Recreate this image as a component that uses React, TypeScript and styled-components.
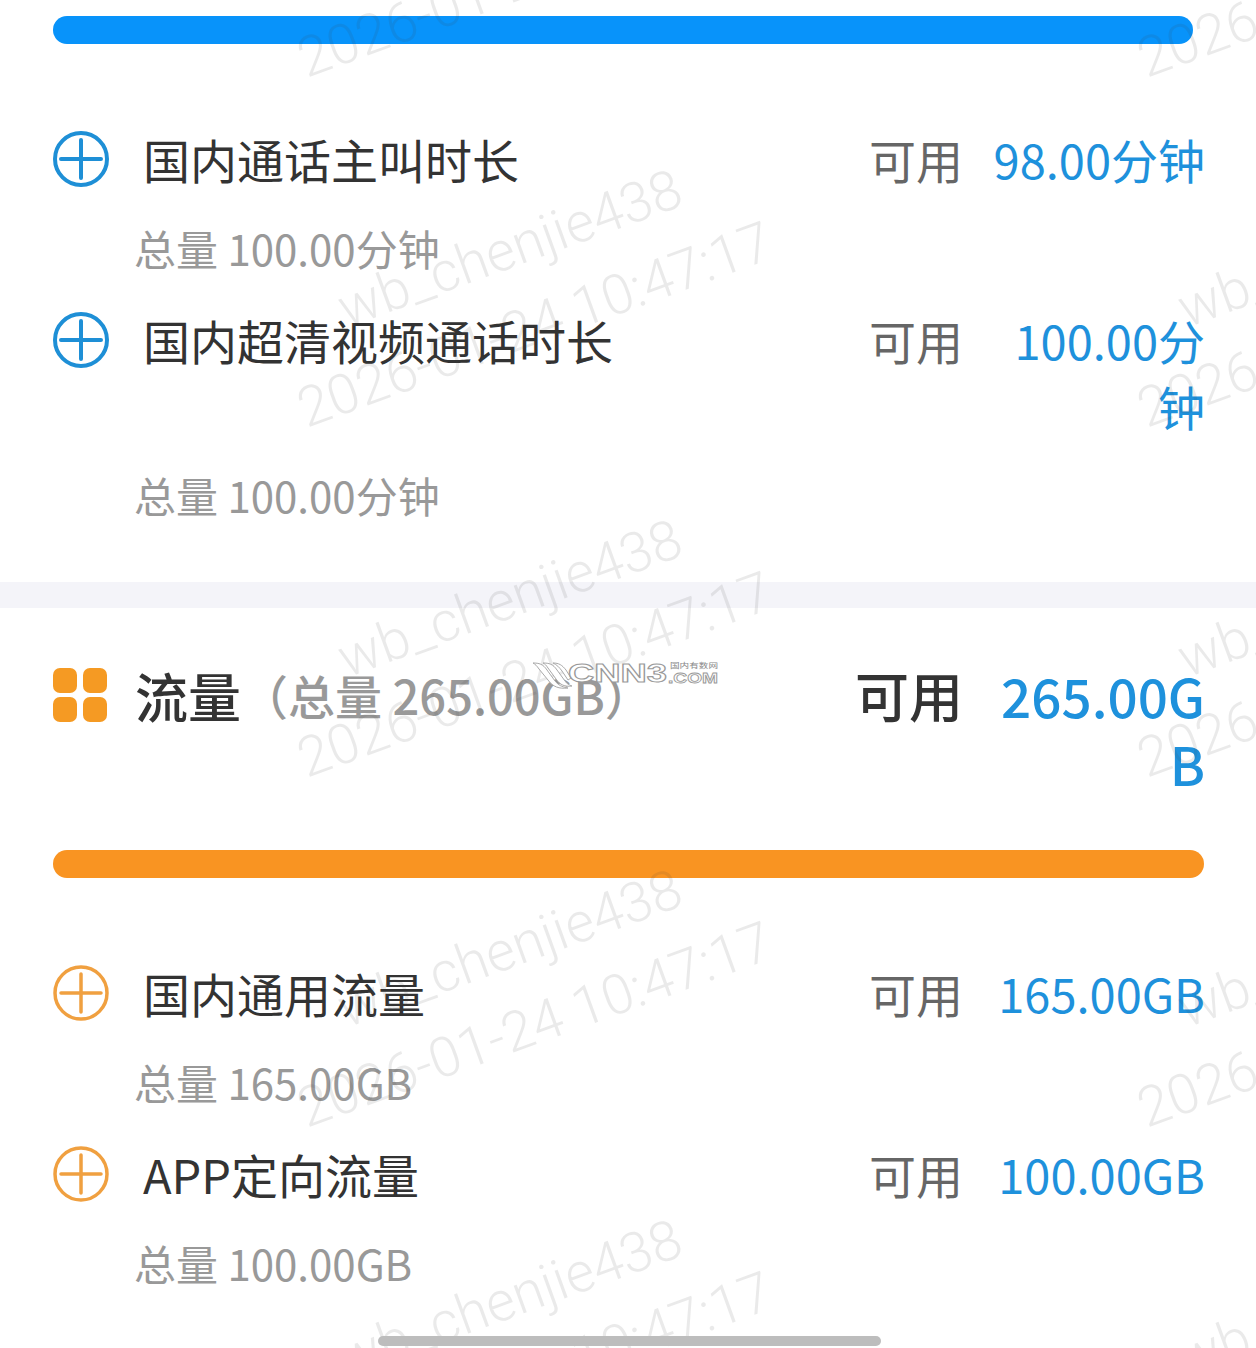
import React from "react";
import styled, { createGlobalStyle } from "styled-components";

const Global = createGlobalStyle`
  html, body { margin: 0; padding: 0; background: #fff; }
  body { font-family: "Noto Sans CJK SC", "Noto Sans", sans-serif; }
`;

const Page = styled.div`
  position: relative;
  width: 1256px;
  height: 1348px;
  overflow: hidden;
  background: #fff;
`;

const Section = styled.section<{ $pb: number }>`
  padding: 0 51px ${(p) => p.$pb}px 53px;
`;

const FirstSection = styled(Section)`
  padding-top: 16px;
`;

const Band = styled.div`
  height: 26px;
  background: #f4f4f9;
`;

const Header = styled.header`
  display: flex;
  align-items: flex-start;
  justify-content: space-between;
  padding-top: 53px;
`;

const HeaderLeft = styled.div`
  display: flex;
  align-items: center;
  height: 68px;
`;

const HeaderTitle = styled.span`
  margin-left: 28px;
  font-size: 53px;
  line-height: 68px;
  font-weight: 500;
  color: #333;
`;

const HeaderTotal = styled.span`
  font-size: 47px;
  line-height: 68px;
  font-weight: 500;
  color: #999;
`;

const Bar = styled.div<{ $color: string; $w: number }>`
  width: ${(p) => p.$w}px;
  height: 28px;
  border-radius: 14px;
  background: ${(p) => p.$color};
`;

const HeaderBar = styled(Bar)`
  margin-top: 53px;
`;

const List = styled.div`
  margin-top: 82px;
  display: flex;
  flex-direction: column;
`;

const Row = styled.div`
  display: flex;
  align-items: flex-start;
  justify-content: space-between;
`;

const NameWrap = styled.div`
  display: flex;
  align-items: center;
  height: 66px;
`;

const Name = styled.span`
  margin-left: 34px;
  font-size: 47px;
  line-height: 66px;
  color: #333;
`;

const Avail = styled.div<{ $big?: boolean }>`
  display: flex;
  align-items: flex-start;
  line-height: ${(p) => (p.$big ? 68 : 66)}px;
`;

const AvailLabel = styled.span<{ $big?: boolean }>`
  white-space: nowrap;
  font-weight: ${(p) => (p.$big ? 500 : 400)};
  color: ${(p) => (p.$big ? "#333" : "#666")};
  font-size: ${(p) => (p.$big ? 54 : 47)}px;
`;

const AvailValue = styled.span<{ $big?: boolean }>`
  width: 212px;
  margin-left: ${(p) => (p.$big ? 30 : 30)}px;
  text-align: right;
  word-break: break-all;
  color: #1e91dc;
  font-size: ${(p) => (p.$big ? 53 : 47)}px;
  font-weight: ${(p) => (p.$big ? 500 : 400)};
`;

const Total = styled.div`
  padding: 28px 0 31px 81px;
  font-size: 42px;
  line-height: 56px;
  color: #999;
`;

const Watermark = styled.div`
  position: absolute;
  transform-origin: left top;
  transform: rotate(-20deg);
  font-family: "Roboto", sans-serif;
  font-weight: 300;
  font-size: 55.5px;
  line-height: 66px;
  white-space: nowrap;
  color: rgba(60, 60, 60, 0.11);
  pointer-events: none;
`;

const Logo = styled.svg`
  position: absolute;
  left: 531px;
  top: 658px;
`;

const HomeIndicator = styled.div`
  position: absolute;
  left: 378px;
  top: 1336px;
  width: 503px;
  height: 10px;
  border-radius: 5px;
  background: #bdbdbd;
`;

const CrossCircle = ({ color, width }: { color: string; width: number }) => (
  <svg width="56" height="56" viewBox="0 0 56 56" fill="none">
    <circle cx="28" cy="28" r="26" stroke={color} strokeWidth={width} />
    <path d="M28 9v38M8 28h40" stroke={color} strokeWidth={width} strokeLinecap="round" />
  </svg>
);

const GridIcon = () => (
  <svg width="54" height="54" viewBox="0 0 54 54" fill="#f59a23">
    <rect x="0" y="0" width="24" height="25" rx="7" />
    <rect x="30" y="0" width="24" height="25" rx="7" />
    <rect x="0" y="29" width="24" height="25" rx="7" />
    <rect x="30" y="29" width="24" height="25" rx="7" />
  </svg>
);

type Item = { name: string; value: string; total: string };

const ItemRow = ({ item, color, sw }: { item: Item; color: string; sw: number }) => (
  <div>
    <Row>
      <NameWrap>
        <CrossCircle color={color} width={sw} />
        <Name>{item.name}</Name>
      </NameWrap>
      <Avail>
        <AvailLabel>可用</AvailLabel>
        <AvailValue>{item.value}</AvailValue>
      </Avail>
    </Row>
    <Total>总量 {item.total}</Total>
  </div>
);

const voice: Item[] = [
  { name: "国内通话主叫时长", value: "98.00分钟", total: "100.00分钟" },
  { name: "国内超清视频通话时长", value: "100.00分钟", total: "100.00分钟" },
];

const data: Item[] = [
  { name: "国内通用流量", value: "165.00GB", total: "165.00GB" },
  { name: "APP定向流量", value: "100.00GB", total: "100.00GB" },
];

const marks: { text: string; x: number; y: number }[] = [];
[-280, 70, 420, 770, 1120, 1470].forEach((y) => {
  [289, 1129].forEach((x) => {
    marks.push({ text: "2026-01-24 10:47:17", x, y: y - 40 });
    marks.push({ text: "wb_chenjie438", x: x + 40, y: y - 140 });
  });
});

export default function App() {
  return (
    <Page>
      <Global />
      <FirstSection $pb={28}>
        <Bar $color="#0893fa" $w={1140} />
        <List>
          {voice.map((i) => (
            <ItemRow key={i.name} item={i} color="#1e8fd6" sw={4} />
          ))}
        </List>
      </FirstSection>
      <Band />
      <Section $pb={0}>
        <Header>
          <HeaderLeft>
            <GridIcon />
            <HeaderTitle>流量</HeaderTitle>
            <HeaderTotal>（总量 265.00GB）</HeaderTotal>
          </HeaderLeft>
          <Avail $big>
            <AvailLabel $big>可用</AvailLabel>
            <AvailValue $big>265.00GB</AvailValue>
          </Avail>
        </Header>
        <HeaderBar $color="#f99422" $w={1151} />
        <List>
          {data.map((i) => (
            <ItemRow key={i.name} item={i} color="#f0a040" sw={3.5} />
          ))}
        </List>
      </Section>
      {marks.map((m) => (
        <Watermark key={m.text + m.x + m.y} style={{ left: m.x, top: m.y }}>
          {m.text}
        </Watermark>
      ))}
      <Logo width="190" height="34" viewBox="0 0 190 34">
        <path d="M2 5c6 0 10 1 14 7l8 11c3 4 7 6 13 7-9 1-15-1-20-8L8 11C6 8 4 6 2 5z" fill="#fff" stroke="#aaa" strokeWidth="1" />
        <path d="M12 5c6 0 10 1 14 7l8 11c2 3 4 4 7 5-7 1-12-1-16-7l-8-11c-2-3-3-4-5-5z" fill="#fff" stroke="#aaa" strokeWidth="1" />
        <path d="M22 5c6 0 9 2 13 7l5 8-3 2-6-9c-3-4-5-6-9-8z" fill="#fff" stroke="#aaa" strokeWidth="1" />
        <text x="37" y="24" fontFamily="Liberation Sans, sans-serif" fontSize="26" fontWeight="700" fill="#fff" stroke="#999" strokeWidth="1" textLength="99" lengthAdjust="spacingAndGlyphs">CNN3</text>
        <text x="137" y="25" fontFamily="Liberation Sans, sans-serif" fontSize="15" fontWeight="700" fill="#fff" stroke="#999" strokeWidth="0.8" textLength="50" lengthAdjust="spacingAndGlyphs">.COM</text>
        <text x="139" y="10" fontFamily="Noto Sans CJK SC, sans-serif" fontSize="7" fill="#888" textLength="48" lengthAdjust="spacingAndGlyphs">国内有数网</text>
      </Logo>
      <HomeIndicator />
    </Page>
  );
}
